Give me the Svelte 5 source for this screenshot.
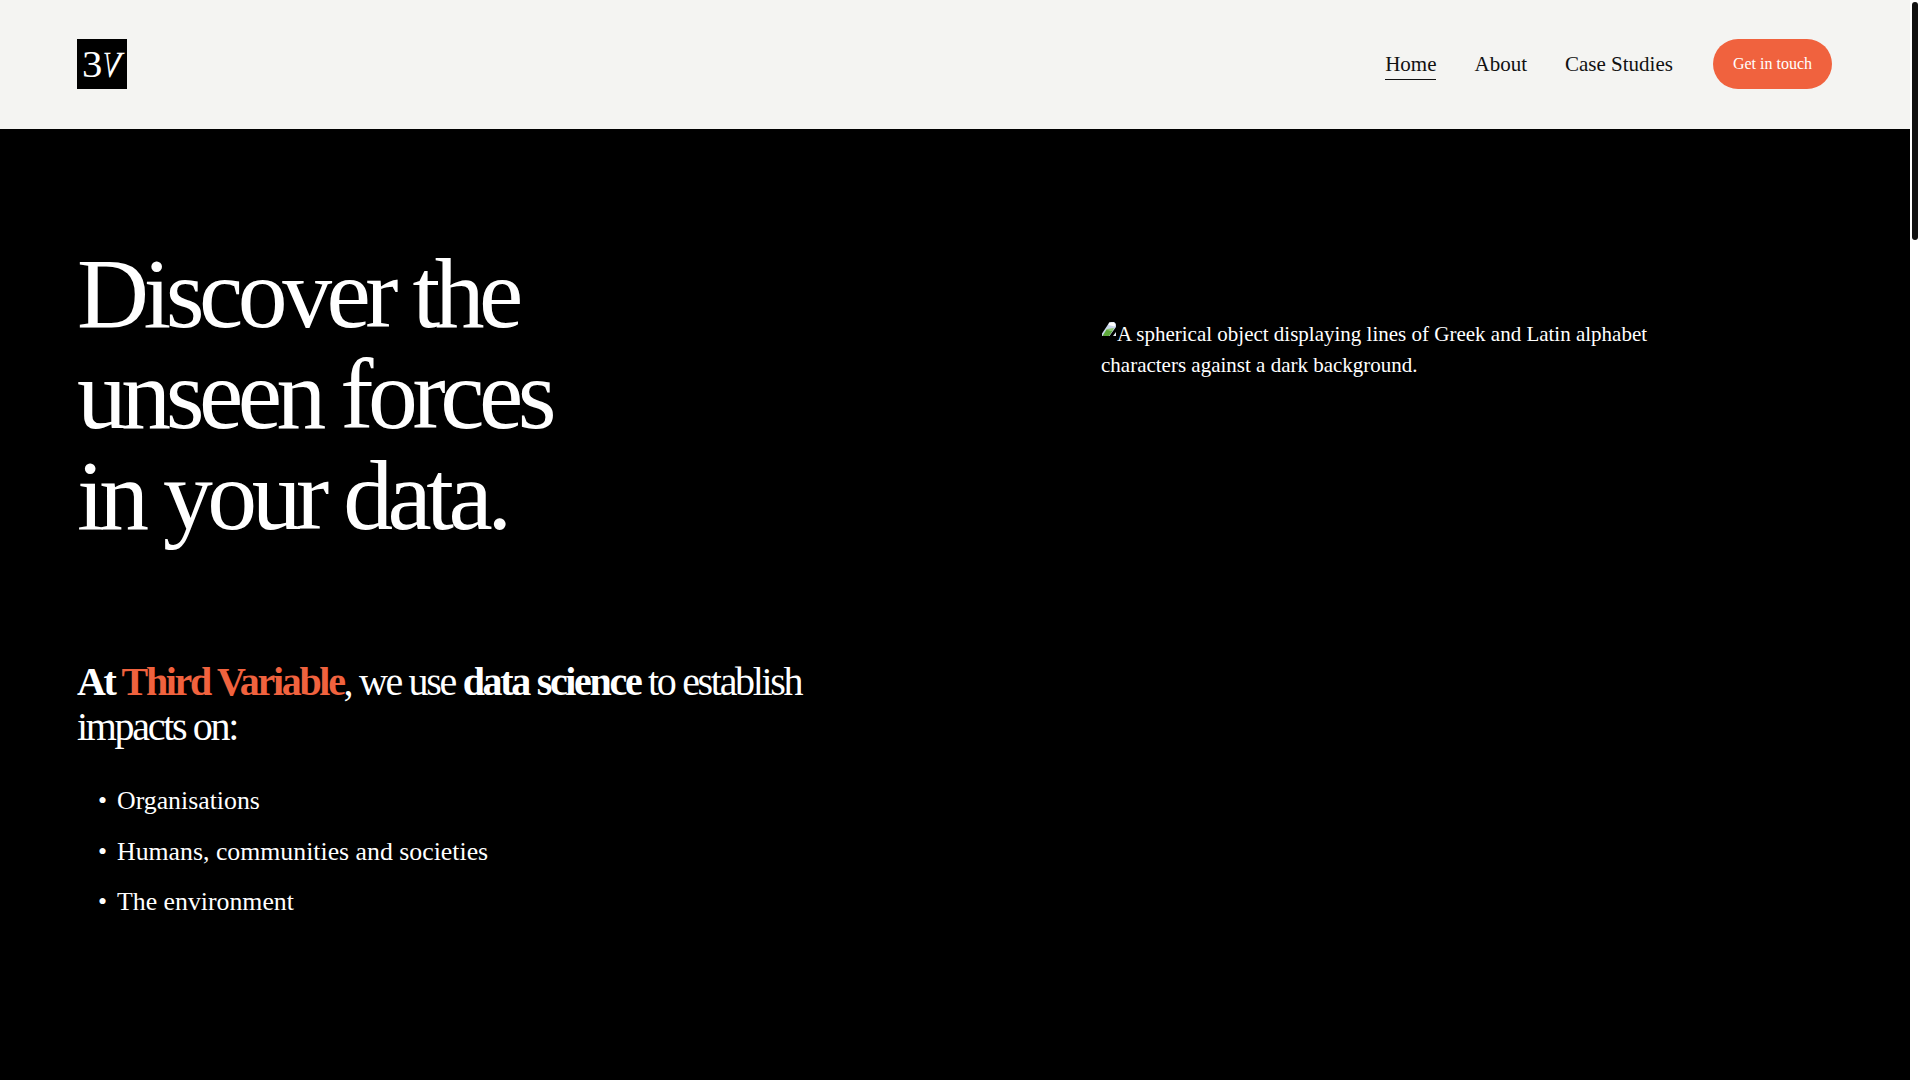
<script>
  const links = [
    { label: 'Home', active: true },
    { label: 'About', active: false },
    { label: 'Case Studies', active: false }
  ];
  const impacts = ['Organisations', 'Humans, communities and societies', 'The environment'];
</script>

<div class="page">
  <div class="content">
    <header class="header">
      <a class="logo" href="#top" aria-label="Third Variable"><span class="three">3</span><span class="vee">V</span></a>
      <nav class="nav">
        {#each links as link}
          <a class="link" class:active={link.active} href="#top">{link.label}</a>
        {/each}
        <a class="cta" href="#top">Get in touch</a>
      </nav>
    </header>

    <main class="hero">
      <div class="copy">
        <h1>Discover the<br />unseen forces<br />in your data.</h1>
        <h2><strong>At <em>Third Variable</em></strong>, we use <strong>data science</strong> to establish impacts on:</h2>
        <ul>
          {#each impacts as item}
            <li>{item}</li>
          {/each}
        </ul>
      </div>
      <div class="figure">
        <p>
          <svg class="broken" viewBox="0 0 16 17" width="16" height="17" aria-hidden="true">
            <path d="M1 15 L1 12.5 L7 3.5 Q8 1 10 1 L13 1 Q15 2 15 4 L15 6 L8.5 15 Z" fill="#c9d6ea" />
            <path d="M8 1.5 L13 1.5 L14.5 3.5 L13.5 5.5 L7.5 4 Z" fill="#fff" />
            <path d="M1.5 15 L5.5 8.5 L11.5 10 L8 15 Z" fill="#5da83a" />
            <path d="M6 8 L13 7 L11.5 10 L5.5 9 Z" fill="#8cc86a" />
            <path d="M12 15 L15 11 L15 15 Z" fill="#e8eef6" />
          </svg>A spherical object displaying lines of Greek and Latin alphabet characters against a dark background.
        </p>
      </div>
    </main>
  </div>
  <div class="rail" aria-hidden="true"><div class="thumb"></div></div>
</div>

<style>
  :global(body) {
    margin: 0;
    background: #000;
  }

  .page {
    display: flex;
    height: 100vh;
    overflow: hidden;
    background: #fff;
    font-family: "Liberation Serif", "Times New Roman", serif;
  }

  .content {
    flex: 1;
    background: #000;
  }

  /* scrollbars don't paint in the headless window, so the rail is drawn */
  .rail {
    flex: none;
    width: 10px;
    padding: 2px 2px 0;
    box-sizing: border-box;
    background: #fff;
  }

  .thumb {
    height: 238px;
    border-radius: 3px;
    background: #111;
  }

  .header {
    display: flex;
    align-items: center;
    justify-content: space-between;
    height: 129px;
    padding: 0 78px 1px 77px;
    box-sizing: border-box;
    background: #f4f4f2;
  }

  .logo {
    display: flex;
    align-items: center;
    justify-content: center;
    width: 50px;
    height: 50px;
    background: #000;
    color: #fff;
    text-decoration: none;
    font-size: 37px;
    line-height: 1;
  }

  .three {
    margin-left: 2px;
    transform: scaleX(1.1);
  }

  .vee {
    margin: 0 -3px 0 -3px;
    transform: scaleX(-0.78) skewX(14deg);
  }

  .nav {
    display: flex;
    align-items: center;
    gap: 38px;
  }

  .link {
    padding: 4px 0 2px;
    border-bottom: 1px solid transparent;
    color: #111;
    text-decoration: none;
    font-size: 21px;
  }

  .link.active {
    border-bottom-color: #111;
  }

  .cta {
    margin-left: 2px;
    padding: 0 20px;
    height: 50px;
    line-height: 50px;
    border-radius: 25px;
    background: #f0623e;
    color: #fff;
    text-decoration: none;
    font-size: 16px;
  }

  .hero {
    display: grid;
    grid-template-columns: 1024px 1fr;
    padding: 114px 0 0 77px;
    color: #fff;
  }

  h1 {
    margin: 0 0 113px;
    font-size: 99.7px;
    line-height: 101px;
    font-weight: 400;
    letter-spacing: -0.055em;
  }

  h2 {
    margin: 0 0 34px;
    max-width: 760px;
    font-size: 40px;
    line-height: 45px;
    font-weight: 400;
    letter-spacing: -0.058em;
  }

  h2 em {
    font-style: normal;
    color: #f0623e;
  }

  ul {
    margin: 0;
    padding: 0 0 0 21px;
    list-style: none;
  }

  li {
    margin-bottom: 15.5px;
    font-size: 25.8px;
    line-height: 35px;
  }

  li::before {
    content: "•";
    display: inline-block;
    width: 19px;
  }

  .figure {
    padding-top: 76px;
    width: 560px;
  }

  .figure p {
    margin: 0;
    font-size: 21px;
    line-height: 31px;
  }

  .broken {
    vertical-align: 3px;
  }
</style>
